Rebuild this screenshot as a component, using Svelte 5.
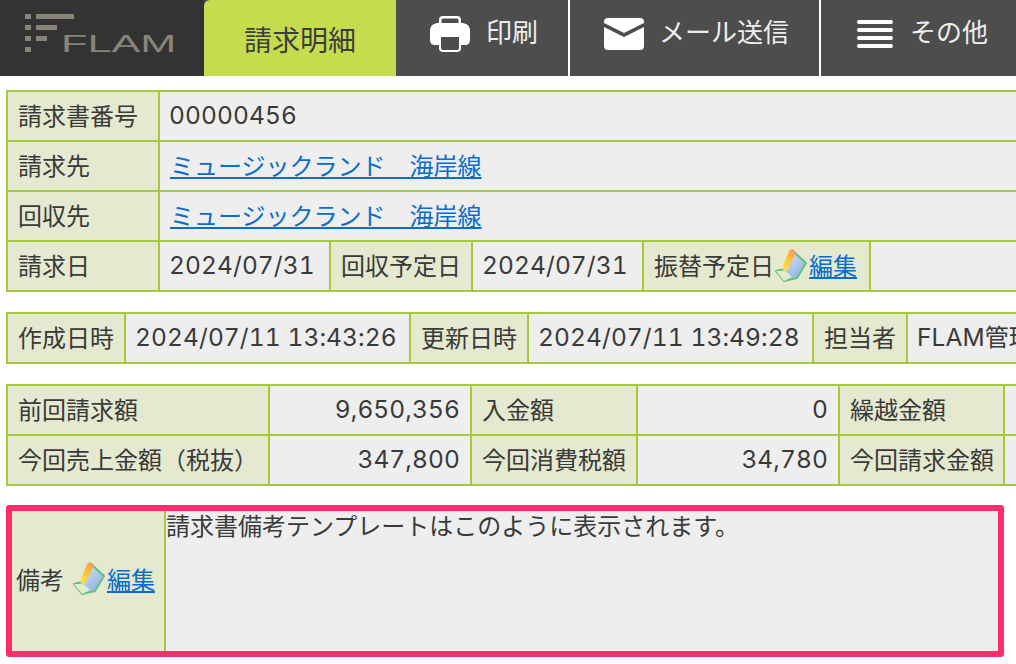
<script lang="ts">
	const summary = [
		[
			['前回請求額', '9,650,356'],
			['入金額', '0'],
			['繰越金額', '']
		],
		[
			['今回売上金額（税抜）', '347,800'],
			['今回消費税額', '34,780'],
			['今回請求金額', '']
		]
	];
</script>

{#snippet editIcon()}
	<svg class="edit-icon" viewBox="0 0 34 34" aria-hidden="true">
		<defs>
			<linearGradient id="paper" x1="0" y1="0" x2="1" y2="1">
				<stop offset="0" stop-color="#e6eef8" />
				<stop offset="1" stop-color="#7fa9dc" />
			</linearGradient>
			<linearGradient id="pencil" x1="0.7" y1="0" x2="0.3" y2="1">
				<stop offset="0" stop-color="#ee9a80" />
				<stop offset="0.3" stop-color="#fdb52e" />
				<stop offset="1" stop-color="#ffe24a" />
			</linearGradient>
		</defs>
		<path d="M3 23 L11 21 L21 4 L33 15 L24 30 L11 33 Z" fill="url(#paper)" stroke="#62c080" stroke-width="2" stroke-linejoin="round" />
		<path d="M9 21 L16 3 Q18 0 21 2 L23 4 L14 23 Z" fill="url(#pencil)" />
		<path d="M3 23 L12 23 L19 29 L11 33 Z" fill="#e0efc8" />
	</svg>
{/snippet}

<header class="topbar">
	<div class="logo">
		<div class="mark">
			<i class="dot d1"></i><i class="bar b1"></i>
			<i class="dot d2"></i><i class="bar b2"></i>
			<i class="dot d3"></i><i class="bar b3"></i>
			<i class="dot d4"></i>
		</div>
		<span class="logo-text">FLAM</span>
	</div>
	<div class="tab-active">請求明細</div>
	<button class="tab tab-print">
		<svg width="40" height="36" viewBox="0 0 40 36" aria-hidden="true">
			<path d="M9 4 Q9 0 13 0 H27 Q31 0 31 4 V7 H33 Q40 8 40 15 V24 Q40 29 35 29 H31 V19 H9 V29 H5 Q0 29 0 24 V15 Q0 8 7 7 H9 Z M11.500 4 V7 H28.500 V4 Q28.500 2.500 27 2.500 H13 Q11.500 2.500 11.500 4 Z" fill="#fff" fill-rule="evenodd" />
			<path d="M9 19 H31 V32 Q31 36 27 36 H13 Q9 36 9 32 Z M11 21 V32 Q11 34 13 34 H27 Q29 34 29 32 V21 Z" fill="#fff" fill-rule="evenodd" />
		</svg>
		<span>印刷</span>
	</button>
	<button class="tab tab-mail">
		<svg width="40" height="32" viewBox="0 0 40 32" aria-hidden="true">
			<path d="M4 0 H36 Q40 0 40 4 V5 L20 15 L0 5 V4 Q0 0 4 0 Z" fill="#fff" />
			<path d="M0 9 L20 19 L40 9 V28 Q40 32 36 32 H4 Q0 32 0 28 Z" fill="#fff" />
		</svg>
		<span>メール送信</span>
	</button>
	<button class="tab tab-more">
		<span class="burger"><i></i><i></i><i></i><i></i></span>
		<span>その他</span>
	</button>
</header>

<main class="page">
	<table class="sheet sheet-main">
		<tbody>
			<tr>
				<th class="w-label">請求書番号</th>
				<td class="wide"><span class="num">00000456</span></td>
			</tr>
			<tr>
				<th>請求先</th>
				<td class="wide"><a href="#a">ミュージックランド　海岸線</a></td>
			</tr>
			<tr>
				<th>回収先</th>
				<td class="wide"><a href="#a">ミュージックランド　海岸線</a></td>
			</tr>
			<tr>
				<th>請求日</th>
				<td class="nested">
					<table class="inner">
						<tbody>
							<tr>
								<td class="d1c"><span class="num">2024/07/31</span></td>
								<th class="d2c">回収予定日</th>
								<td class="d3c"><span class="num">2024/07/31</span></td>
								<th class="d4c">振替予定日{@render editIcon()}<a href="#a">編集</a></th>
							</tr>
						</tbody>
					</table>
				</td>
			</tr>
		</tbody>
	</table>

	<table class="sheet sheet-meta">
		<tbody>
			<tr>
				<th class="m1">作成日時</th>
				<td class="m2"><span class="num">2024/07/11 13:43:26</span></td>
				<th class="m3">更新日時</th>
				<td class="m4"><span class="num">2024/07/11 13:49:28</span></td>
				<th class="m5">担当者</th>
				<td class="m6"><span class="num">FLAM</span>管理者</td>
			</tr>
		</tbody>
	</table>

	<table class="sheet sheet-sum">
		<tbody>
			{#each summary as row}
				<tr>
					{#each row as [label, value], i}
						<th class="s-l{i}">{label}</th>
						<td class="s-v{i}"><span class="num">{value}</span></td>
					{/each}
				</tr>
			{/each}
		</tbody>
	</table>

	<section class="note">
		<div class="note-label">
			<span class="note-title">備考</span>{@render editIcon()}<a href="#a">編集</a>
		</div>
		<div class="note-body">請求書備考テンプレートはこのように表示されます。</div>
	</section>
</main>

<style>
	:global(body) {
		margin: 0;
		background: #fff;
		overflow: hidden;
		font-family: "Noto Sans CJK JP", "Liberation Sans", sans-serif;
		color: #3a3a3a;
	}

	.topbar {
		display: flex;
		height: 76px;
		background: #4d4d4d;
		overflow: hidden;
	}
	.logo {
		position: relative;
		width: 204px;
		flex: none;
		background: #333;
	}
	.mark {
		position: absolute;
		left: 25px;
		top: 14px;
		width: 50px;
		height: 38px;
	}
	.mark i {
		position: absolute;
		background: #8a8478;
	}
	.dot {
		left: 0;
		width: 6px;
		height: 5px;
	}
	.d1 { top: 0; }
	.d2 { top: 11px; }
	.d3 { top: 22px; }
	.d4 { top: 33px; }
	.bar {
		left: 11px;
		height: 5px;
	}
	.b1 { top: 0; width: 38px; }
	.b2 { top: 11px; width: 21px; }
	.b3 { top: 22px; width: 11px; }
	.logo-text {
		position: absolute;
		left: 61px;
		top: 31px;
		font-family: "Liberation Sans", sans-serif;
		font-size: 23px;
		line-height: 26px;
		color: #8a8478;
		transform: scaleX(1.88);
		transform-origin: left center;
	}
	.tab-active {
		width: 192px;
		flex: none;
		display: flex;
		align-items: center;
		justify-content: center;
		padding-top: 2px;
		box-sizing: border-box;
		background: #c5dc4e;
		border-top-left-radius: 6px;
		font-size: 28px;
		color: #3d3d3d;
	}
	.tab {
		display: flex;
		align-items: flex-start;
		flex: none;
		border: 0;
		background: #4d4d4d;
		color: #eee;
		font-family: inherit;
		font-size: 26px;
		padding: 0;
		box-sizing: border-box;
		border-right: 2px solid #fff;
	}
	.tab span {
		line-height: 36px;
	}
	.tab-print {
		width: 174px;
		padding: 16px 0 0 34px;
		gap: 16px;
	}
	.tab-mail {
		width: 251px;
		padding: 18px 0 0 34px;
		gap: 15px;
	}
	.tab-more {
		width: 195px;
		padding: 20px 0 0 36px;
		gap: 17px;
		border-right: 0;
	}
	.tab-print span { margin-top: -3px; }
	.tab-mail span { margin-top: -5px; }
	.tab-more span.burger {
		display: flex;
		flex-direction: column;
		gap: 4px;
		width: 36px;
	}
	.burger i {
		display: block;
		height: 4px;
		border-radius: 2px;
		background: #fff;
	}
	.tab-more span:last-child { margin-top: -7px; }

	.page {
		padding: 14px 0 0 6px;
		width: 1300px;
	}
	.sheet,
	.inner {
		border-collapse: collapse;
		table-layout: fixed;
	}
	.sheet {
		margin-bottom: 20px;
	}
	th,
	td {
		border: 2px solid #a6c83c;
		height: 50px;
		padding: 0 10px 2px;
		font-size: 24px;
		font-weight: 400;
		text-align: left;
		white-space: nowrap;
		box-sizing: border-box;
		line-height: 1.2;
	}
	th {
		background: #e4e9cf;
	}
	td {
		background: #eee;
	}
	.num {
		font-family: Inter, "Noto Sans CJK JP", sans-serif;
		font-size: 24.500px;
		font-variant-numeric: tabular-nums;
		letter-spacing: 0.1px;
		margin-left: -1px;
	}
	a {
		color: #0a6ccc;
		text-decoration: underline;
	}
	.sheet-main {
		width: 1100px;
	}
	.w-label {
		width: 152px;
	}
	.nested {
		padding: 0;
		border-right: 0;
	}
	.inner {
		margin: -2px 0 -2px -2px;
	}
	.inner th,
	.inner td {
		height: 50px;
	}
	.d1c { width: 171px; }
	.d2c { width: 142px; }
	.d3c { width: 171px; }
	.d4c { width: 227px; }
	.edit-icon {
		flex: none;
		width: 34px;
		height: 34px;
		vertical-align: -7px;
		margin: 0 2px 0 -1px;
	}
	.m1 { width: 118px; }
	.m2 { width: 285px; }
	.m3 { width: 118px; }
	.m4 { width: 285px; }
	.m5 { width: 94px; }
	.m6 { width: 240px; }
	.sheet-sum {
		width: 1200px;
		margin-bottom: 19px;
	}
	.s-l0 { width: 262px; }
	.s-v0 { width: 202px; text-align: right; }
	.s-l1 { width: 166px; }
	.s-v1 { width: 202px; text-align: right; }
	.s-l2 { width: 165px; }
	.s-v2 { width: 202px; text-align: right; }

	.note {
		display: flex;
		width: 998px;
		height: 152px;
		box-sizing: border-box;
		border: 6px solid #ff2d6e;
		border-radius: 3px;
		background: #eee;
		font-size: 24px;
	}
	.note-label {
		width: 154px;
		flex: none;
		display: flex;
		align-items: center;
		padding: 0 0 6px 4px;
		box-sizing: border-box;
		background: #e4e9cf;
		border-right: 2px solid #a6c83c;
		white-space: nowrap;
	}
	.note-title {
		margin-right: 8px;
	}
	.note-body {
		padding: 0;
		line-height: 28px;
	}
</style>
